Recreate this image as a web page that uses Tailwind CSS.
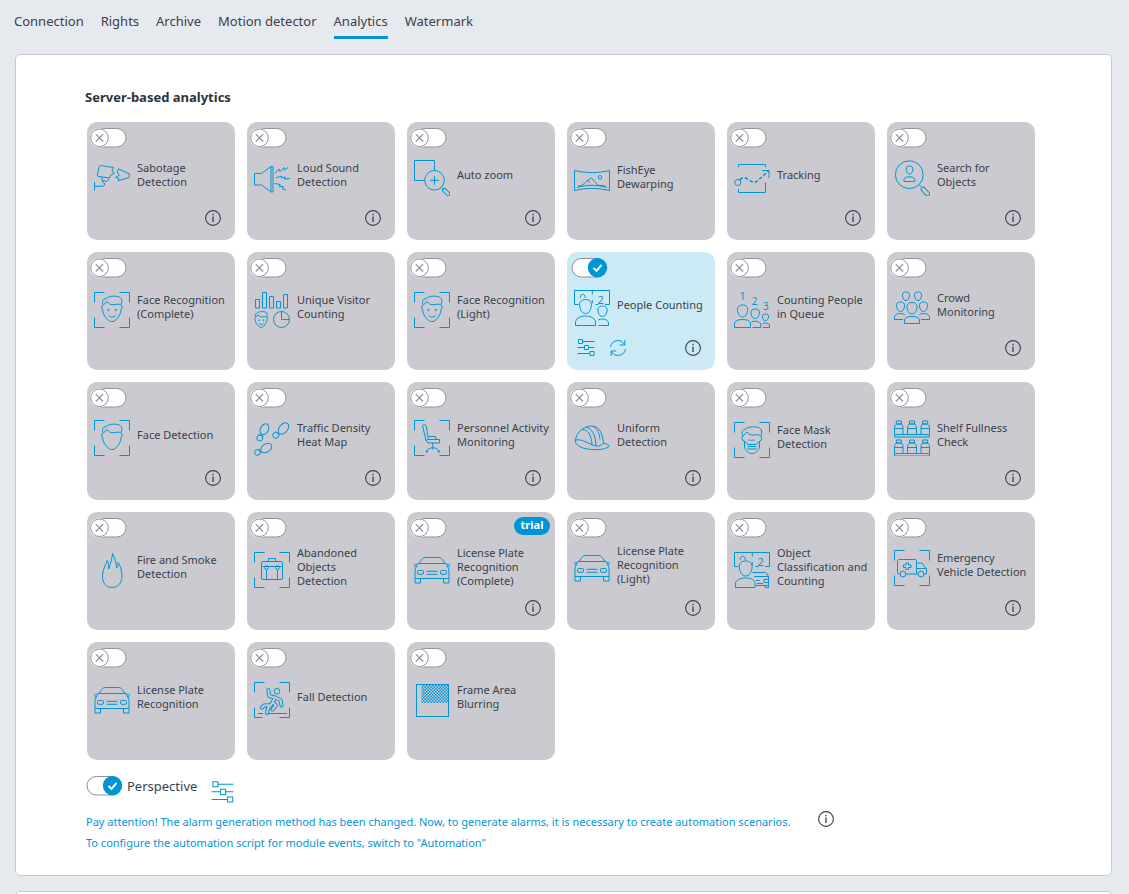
<!DOCTYPE html>
<html lang="en">
<head>
<meta charset="utf-8">
<meta name="viewport" content="width=device-width, initial-scale=1">
<title>Analytics</title>
<script src="https://cdn.jsdelivr.net/npm/@tailwindcss/browser@4"></script>
</head>
<body class="min-h-screen overflow-x-hidden bg-[#e6e9ee] font-['Noto_Sans',sans-serif] text-[13px] text-[#39414d]">

<svg class="absolute h-0 w-0" aria-hidden="true">
  <defs>
    <pattern id="checker" width="3" height="3" patternUnits="userSpaceOnUse"><path d="M0 0h1.5v1.5H0zM1.5 1.5H3V3H1.5z" fill="#0095d5"/></pattern>
    <symbol id="off" viewBox="0 0 38 20">
      <rect x=".5" y=".5" width="35.5" height="18.5" rx="9.25" fill="#fff" stroke="#8f909c"/>
      <circle cx="9.5" cy="9.8" r="9.8" fill="#fff"/>
      <circle cx="9.5" cy="9.8" r="8.8" fill="#fff" stroke="#8f909c"/>
      <path d="M5.8 6.1l7.4 7.4M13.2 6.1l-7.4 7.4" stroke="#8f909c" stroke-width="1.2" fill="none"/>
    </symbol>
    <symbol id="on" viewBox="0 0 38 20">
      <rect x="2" y=".5" width="34" height="18.5" rx="9.25" fill="#fff" stroke="#8f909c"/>
      <circle cx="27.5" cy="9.7" r="9.7" fill="#0095d5"/>
      <path d="M23.5 10l3 2.8 5-5.8" stroke="#fff" stroke-width="2" fill="none"/>
    </symbol>
    <symbol id="info" viewBox="0 0 16 16">
      <circle cx="8" cy="8" r="7.4" fill="none" stroke="#39414d" stroke-width="1.1"/>
      <path d="M8 6.5v5.5M8 3.8v1.4" stroke="#39414d" stroke-width="1.3"/>
    </symbol>
    <symbol id="sliders" viewBox="0 0 18 18">
      <path d="M5.5 2.500H17.500M.5 8.500h6.500M11 8.500h6.500M.5 14.500H13M1.500.5h4v4h-4zM7.500 6.500h4v4h-4zM13 12.500h4v4h-4z"/>
    </symbol>
    <symbol id="refresh" viewBox="0 0 18 18">
      <path d="M1.500 8A7.500 7.500 0 0 1 15.500 5.500M15.800 1v5h-5M16.500 10A7.500 7.500 0 0 1 2.500 12.500M2.200 17v-5h5"/>
    </symbol>
    <symbol id="corners" viewBox="0 0 36 36">
      <path d="M.5 10.500V.5H10.500M25.500.5h10V10.500M35.500 25.500v10h-10M10.500 35.500H.5v-10"/>
    </symbol>
    <symbol id="head" viewBox="0 0 36 36" overflow="visible">
      <path d="M9.300 12.800c-1.800.2-2 3.200-.8 5.200.5 4 2.500 7 5 9.500 2.800 2.800 6 2.800 8.800 0 2.500-2.500 4.200-5.500 4.800-9.500 1.400-2 1.200-5-.4-5.400M9.300 12.800C7.300 9 9.500 6.500 12 6.800 14 4 20 3.600 24 4.600c4 1.100 5 4.400 2.800 8M9.300 12.800l4-3.300c1.500 2.600 4 3.700 6.700 3.200 2.500-.5 4.800-.7 6.700 0"/>
    </symbol>
    <symbol id="smile" viewBox="0 0 36 36" overflow="visible">
      <path d="M14.700 23.500c2 2.200 5 2.200 7 0"/><circle cx="14.300" cy="18" r=".7"/><circle cx="21.700" cy="18" r=".7"/>
    </symbol>
    <symbol id="car" viewBox="0 0 36 36">
      <path d="M5 11.500L7.700 7.500C8.500 6 10 5.500 12 5.500h12c2 0 3.500.5 4.300 2l2.700 4M3.500 11.500h29M3.500 12.500H1.200C.3 12.500.3 14.500 1.200 14.500H2M32.500 12.500h2.300c.9 0 .9 2 0 2H34M3.500 13L1.700 16c-.6 1-.7 2-.7 3.500v7h34v-7c0-1.500-.1-2.500-.7-3.500l-1.800-3M1 26.500v4.500h5.500v-4.500M29.500 26.500v4.500H35v-4.500M12.500 19.300h11M12.500 22.300h11"/>
      <rect x="3.500" y="18.500" width="6" height="3.800" rx="1.200"/><rect x="26.500" y="18.500" width="6" height="3.800" rx="1.200"/>
    </symbol>
    <symbol id="board" viewBox="0 0 36 36">
      <path d="M4.500 14.500h-4V.5h35v14h-4.500M18.300.5v4M21.500 14.500h3M6.300 8c0-5 5-5 5 0M18.300 10v3.500"/>
      <text x="23.500" y="13.500" font-size="11" font-family="Noto Sans, sans-serif" fill="#0095d5" stroke="none">2</text>
    </symbol>
    <symbol id="bottles" viewBox="0 0 36 18">
      <path d="M.5 14V6.500L2.500 4h5L9 6.500V14M2.300 1h5v3h-5zM.5 8.500H9M13.500 14V6.500l2-2.500h5l2 2.500V14M15.500 1h5v3h-5zM13.500 8.500h9M27 14V6.500L28.500 4h5l2 2.500V14M28.700 1h5v3h-5zM27 8.500h8.500M.5 14.500h35v2.500H.5z"/>
    </symbol>

    <symbol id="i-sabotage" viewBox="0 0 36 36"><path d="M6.500 5.500l7.300 1.200 5.700.8-1.600 3.600 2.500 2.200-3.800 1.800-1.200 2.900L4 16.300c-.8-.4-.8-1.200-.5-2.100l1.700-7.600c.2-.7.6-1.200 1.300-1.100zM24.300 8.800L35.500 14l-.5 3.500-11 3.300.8-2.600-3.300-.8 4-2.400-2.200-2.200zM.5 22v8.500M.5 26.300h7.800c1.500 0 1.700-.8 2.700-2.300L8.500 22l-.7-4.500M8.500 20.500l4.500 1 2-2.500"/></symbol>
    <symbol id="i-sound" viewBox="0 0 36 36"><path d="M.5 13.500h7l9.500-7h2V32h-2l-9.500-7h-7zM17 6.500V32M21 13.500l4-4.500 1.200 2.500L30 7.500l.3 2.700 3.700-2.700M21.700 17.700l5.800-1.500.3 2 3-1.400-.3 2.200 5.500-.6M20.500 23.500l5.800 1-1 2.200 4-.2-.8 2.300 3.500 1.400"/></symbol>
    <symbol id="i-zoom" viewBox="0 0 36 36"><path d="M20.500 10.500V.5H.5v20H10.500M20.500 15.800v9M16 20.300h9M27.500 27.500l2 2"/><circle cx="20.500" cy="20.300" r="9.800"/><rect x="28" y="30.200" width="8.500" height="3.600" rx="1.500" transform="rotate(45 32.200 32)"/></symbol>
    <symbol id="i-fisheye" viewBox="0 0 36 36"><path d="M.5 8.500q17.500 4.300 35 0v20q-17.500-4.300-35 0zM3 25.500Q18 21 33 25.500M4 24c3 0 4.500-1 6-2.200l3.500-3.600c1 0 1.300 2 2 2.600M12.500 19.500l4-3.200c2-.5 2.700 1.500 4 3.200l3 3.200c2 1.500 5 .5 8 1.300"/><circle cx="26" cy="15.300" r="1.800"/></symbol>
    <symbol id="i-tracking" viewBox="0 0 36 36"><path d="M4.500 7V4.500h27V7M4.500 29v3.500h27V22.500M28 10.500h7v7.500"/><path d="M6 20c2.500-4 6-2 9 0 4.500 3.500 7 2.500 10-.5l9.500-8.500" stroke-dasharray="3.500 2" stroke-width="1.500"/><circle cx="3.800" cy="22.500" r="3.100"/></symbol>
    <symbol id="i-search" viewBox="0 0 36 36"><circle cx="15.300" cy="14.700" r="13.900"/><path d="M15.500 6c2.500 0 3.800 1.500 3.300 4-.4 2.500-1.500 4-3.300 4s-3-1.500-3.300-4 .8-4 3.300-4zM10 21.500v-2.200c1-2 3-2.500 5.300-2.500s4.500.5 5.400 2.500v2.200zM25 24.500l3 3"/><rect x="26.500" y="29.500" width="10" height="4.200" rx="1.800" transform="rotate(47 31.500 31.500)"/></symbol>
    <symbol id="i-face" viewBox="0 0 36 36"><use href="#corners"/><use href="#head"/><use href="#smile"/></symbol>
    <symbol id="i-facedet" viewBox="0 0 36 36"><use href="#corners"/><use href="#head"/></symbol>
    <symbol id="i-unique" viewBox="0 0 36 36"><path d="M1.500 7.500h4V16h-4zM8.500.5h4V16h-4zM15.500 4.500h4V16h-4zM22.500 9.500h4V16h-4zM29.500 2.500h4V16h-4z"/><circle cx="27.500" cy="27.500" r="8"/><path d="M27.500 19.500v8h8"/><g transform="translate(-4 17) scale(.62)" stroke-width="1.500"><use href="#head"/><use href="#smile"/></g></symbol>
    <symbol id="i-people" viewBox="0 0 36 36"><use href="#board"/><path d="M11.500 9.500c4 0 6.500 2.500 5.800 6.500-.6 4.500-2.500 7.500-5.800 7.500S6.300 20.500 5.700 16C5 12 7.500 9.500 11.500 9.500zM1.500 35.500v-4c1.500-4 5.500-5.500 10-5.500s8.500 1.500 10 5.500v4zM28.500 16c3.500 0 5 2 4.500 5-.5 3.500-2 5.500-4.500 5.500S24.500 24.500 24 21c-.5-3 1-5 4.500-5zM24.500 35.500h10v-3c-1-2.500-3.500-3.500-6-3.500-1.500 0-3 .3-4.300 1"/></symbol>
    <symbol id="i-queue" viewBox="0 0 36 36"><g font-size="10" font-family="Noto Sans, sans-serif" fill="#0095d5" stroke="none" text-anchor="middle"><text x="8.500" y="8">1</text><text x="20.500" y="12.500">2</text><text x="31.800" y="17.500">3</text></g><path d="M8.500 13c3.800 0 5.500 2.200 5 5.500-.6 4-2.300 6.500-5 6.500s-4.400-2.500-5-6.500c-.5-3.300 1.200-5.500 5-5.500zM.5 35.500V31c1.500-2.800 4.500-3.500 8-3.500s6.500.7 8 3.500v4.500zM21.200 17c3.300 0 4.700 1.800 4.200 4.500-.5 3-2 5-4.200 5s-3.700-2-4.200-5c-.4-2.700.9-4.500 4.200-4.500zM18.500 35.500h8.300V32c-1.300-2-3.300-2.700-5.800-2.700-1.500 0-2.500.2-3.500.7M31.500 22c2.300 0 3.300 1.300 3 3.200-.3 2.200-1.500 3.500-3 3.500s-2.700-1.300-3-3.500c-.3-1.900.7-3.200 3-3.200zM29 35.500h6.500V33c-.8-1.500-2.200-2-4-2-1 0-2 .2-2.700.6"/></symbol>
    <symbol id="i-crowd" viewBox="0 0 36 36"><path d="M12 2c2.700 0 3.800 1.500 3.500 3.800-.3 3-1.700 4.700-3.500 4.700s-3.200-1.700-3.500-4.700C8.200 3.500 9.300 2 12 2zM24 2c2.700 0 3.800 1.500 3.500 3.800-.3 3-1.700 4.700-3.500 4.700s-3.200-1.700-3.500-4.700C20.200 3.500 21.300 2 24 2zM6.500 12c3 0 4.300 1.500 4 4.300-.4 3.500-2 5.200-4 5.200s-3.600-1.700-4-5.200C2.200 13.500 3.500 12 6.500 12zM29.500 12c3 0 4.300 1.500 4 4.300-.4 3.500-2 5.200-4 5.200s-3.600-1.700-4-5.200c-.3-2.800 1-4.300 4-4.300zM18 12.500c3.800 0 5.400 2.200 5 5.300-.6 4-2.400 6.200-5 6.200s-4.400-2.200-5-6.200c-.4-3.100 1.200-5.300 5-5.300zM10.500 33.500v-4c1.500-2.500 4-3 7.500-3s6 .5 7.500 3v4zM9 29.500H.5v-3c1.200-2.300 3.200-3 6-3 1.800 0 3 .3 4.200 1M27 29.500h8.500v-3c-1.200-2.300-3.200-3-6-3-1.800 0-3 .3-4.200 1"/></symbol>
    <symbol id="i-steps" viewBox="0 0 36 36"><ellipse cx="10.500" cy="9.200" rx="4" ry="5.700" transform="rotate(28 10.500 9.200)"/><circle cx="5.800" cy="18" r="3"/><path d="M4.500 14.200l5 2.400"/><ellipse cx="29.500" cy="8.500" rx="4.200" ry="6.500" transform="rotate(40 29.500 8.500)"/><circle cx="21.700" cy="15.300" r="3"/><path d="M21.500 11.500l4 3.700"/><ellipse cx="12.300" cy="28" rx="4.200" ry="6" transform="rotate(55 12.300 28)"/><circle cx="3.500" cy="32.500" r="2.900"/><path d="M4.500 28.800l2.700 4.400"/></symbol>
    <symbol id="i-chair" viewBox="0 0 36 36"><use href="#corners"/><path d="M8.500 5.500c1-1 2.500-1 3.500 0l2.500 13.500-2.500 1.500zM12 20.500l2 2.500h11.500v-3.500h-11M15 16.500h6.500l1 3M18.800 23v6.500M13 30.500c1-2 3.500-2.700 5.800-2.700s4.700.7 5.800 2.700"/><circle cx="12.800" cy="31.500" r=".9"/><circle cx="24.800" cy="31.500" r=".9"/></symbol>
    <symbol id="i-helmet" viewBox="0 0 36 36"><path d="M1.500 20C3 12 9 6.500 17 6c7 0 11.500 5 12.500 17.500M1.500 19.500C.5 23.500 4 26.500 10 28.300c8 2.200 20.500 2 24.800-1.800 1.400-1.700-2-2.600-5.300-3.300M1.500 20c8-1.300 13 4.500 20.500 6 3 .6 6-.8 7.500-2.800M8.500 9.500C14.500 9.500 17.500 16 18 25M12 7.300c6.500 1.200 9.700 8.200 10 18.700M19 6.300c4.500 2 6.500 8 7 13"/></symbol>
    <symbol id="i-mask" viewBox="0 0 36 36"><use href="#corners"/><path d="M9 14C7 10 8.500 8 11 7.500 13 5 20 4 24.500 5.500c3.500 1.500 4 5 2.200 8.500M9 14l4-4c1.500 2.500 4 3.500 7 3 2.500-.5 5-.5 6.700 1M9 14c-1.500 1-1.200 4.500.3 5M26.700 14c1.500 1 1.200 4.500-.3 5M9 18l5 4.500h8l5-4.500M10.500 20v5c1.500 4 4 6.500 7.500 6.500s6-2.500 7.500-6.500v-5M13.500 24.500h9M13.500 27h9M14.500 18.500l1.500-1 1.500 1.500 1.500-1.500 1.500 1"/></symbol>
    <symbol id="i-shelf" viewBox="0 0 36 36"><use href="#bottles" width="36" height="18"/><use href="#bottles" y="19" width="36" height="18"/></symbol>
    <symbol id="i-fire" viewBox="0 0 36 36"><path d="M18 35.500c-6.500 0-9.500-5-9.500-11.500S11.500 14.500 13 8.500c1.700 3 1.900 5.500 1.600 8.500C16 12.500 18.300 7 18.500 1.500c2.500 5 4 9.500 4 14.500C23.600 14.500 24 13 24.200 10.500 26.500 14.500 28 19 28 24c0 6.500-3.500 11.500-10 11.500z"/></symbol>
    <symbol id="i-bag" viewBox="0 0 36 36"><use href="#corners"/><path d="M14.500 9.500v-3h7v3M8.300 14.500h19.400M12.500 18v9.500M23.500 18v9.500"/><rect x="7.500" y="9.500" width="21" height="18" rx="1.500"/><circle cx="12.500" cy="15.500" r="1.900"/><circle cx="23.500" cy="15.500" r="1.900"/></symbol>
    <symbol id="i-car" viewBox="0 0 36 36"><use href="#car"/></symbol>
    <symbol id="i-object" viewBox="0 0 36 36"><use href="#board"/><path d="M11.700 9c4.500 0 7 2.500 6.300 7-.7 5-2.800 8-6.300 8s-5.600-3-6.300-8c-.7-4.500 1.800-7 6.300-7zM1.500 35.500v-4.500c1.500-4 5.500-5 10-5s8.500 1 9.500 5v4.500zM18.500 20.500h12c2 0 3 2 4 4v9M20 24.500h14.500M22 28.500h3.500M30 27.500h4.500v3H30zM23 31.500h6M21.500 33.500h13M31 33.500v2h3.500v-2"/></symbol>
    <symbol id="i-van" viewBox="0 0 36 36"><use href="#corners"/><path d="M6 24H4.500c-1 0-1-.5-1-1.500V11c0-1 .5-1.500 1.500-1.500h16c1 0 1.500.5 1.500 1.500v13H12M22.500 13h4c2 0 3 1.500 4 4l2 1.500V24h-2.500M22.500 18.500h9.500M22.500 24H24M12 13h2.500v2H17v2.500h-2.500v2H12v-2H9.500V15H12z"/><circle cx="9" cy="24" r="2.900"/><circle cx="27" cy="24" r="2.900"/></symbol>
    <symbol id="i-fall" viewBox="0 0 36 36"><path d="M.5 10.500V.5H10.500M25.500.5h10V10.500M35.500 25.500v10h-10M8.500 35.500H.5v-10M4 31.500h5M15 31.500h18"/><g stroke-linecap="round" stroke-linejoin="round"><path d="M14.300 8l.9 6 5.800 1.500-4 7.500-7 .5-2 2M17 23l-3 3-1 5M21 15.500l5.500 2.500 1 5.500M19 20.500l3 3-3.500 4" stroke-width="4"/><path d="M14.300 8l.9 6 5.800 1.500-4 7.500-7 .5-2 2M17 23l-3 3-1 5M21 15.500l5.500 2.500 1 5.500M19 20.500l3 3-3.500 4" stroke="#cbcad0" stroke-width="2"/></g><circle cx="23" cy="9.300" r="2.800"/></symbol>
    <symbol id="i-blur" viewBox="0 0 36 36"><rect x="2.500" y="2.500" width="32" height="32"/><rect x="7.500" y="3" width="27" height="18" fill="url(#checker)" stroke="none"/></symbol>
  </defs>
</svg>

<nav class="flex gap-[17px] pt-2 pl-[14px]" aria-label="Camera settings">
  <a href="#" class="h-[31px] leading-[26px]">Connection</a>
  <a href="#" class="h-[31px] leading-[26px]">Rights</a>
  <a href="#" class="h-[31px] leading-[26px]">Archive</a>
  <a href="#" class="h-[31px] leading-[26px]">Motion detector</a>
  <a href="#" class="h-[31px] border-b-3 border-[#0095d5] leading-[26px]" aria-current="page">Analytics</a>
  <a href="#" class="h-[31px] leading-[26px]">Watermark</a>
</nav>

<main class="mt-[15px] pr-[17px] pl-[15px]">
  <section class="rounded-[5px] border border-[#c8c9d0] bg-white pt-8 pr-[60px] pb-[22px] pl-[69px]">
    <h1 class="mb-[15px] text-[13px] leading-5 font-bold text-[#2c333b]">Server-based analytics</h1>
    <ul id="modules" class="ml-0.5 grid grid-cols-[repeat(auto-fill,148px)] gap-3"></ul>

    <div class="mt-4 flex items-start">
      <span class="grid h-5 w-[38px]">
        <input id="perspective" type="checkbox" checked class="col-start-1 row-start-1 h-5 w-[38px] appearance-none rounded-full">
        <svg class="pointer-events-none col-start-1 row-start-1 h-5 w-[38px]"><use href="#on"/></svg>
      </span>
      <label for="perspective" class="ml-1 leading-5">Perspective</label>
      <button type="button" aria-label="Perspective settings" class="mt-[5px] ml-[14px]"><svg class="h-[23px] w-[23px] fill-none stroke-[#0095d5]" stroke-width=".8"><use href="#sliders"/></svg></button>
    </div>
    <div class="mt-[7px] flex items-start pl-px text-[11px] leading-[21px] text-[#0095d5]">
      <p>Pay attention! The alarm generation method has been changed. Now, to generate alarms, it is necessary to create automation scenarios.<br>To configure the automation script for module events, switch to "Automation"</p>
      <button type="button" aria-label="Information" class="ml-7"><svg class="h-4 w-4"><use href="#info"/></svg></button>
    </div>
  </section>
  <section class="mt-[15px] h-10 rounded-[5px] border border-[#c8c9d0] bg-white"></section>
</main>

<script>
  // title, icon, then flags: i = info button, on = enabled, low = body set lower, trial = badge
  const modules = [
    ['Sabotage<br>Detection', 'sabotage', 'i'], ['Loud Sound<br>Detection', 'sound', 'i'], ['Auto zoom', 'zoom', 'i'],
    ['FishEye<br>Dewarping', 'fisheye', ''], ['Tracking', 'tracking', 'i'], ['Search for<br>Objects', 'search', 'i'],
    ['Face Recognition<br>(Complete)', 'face', ''], ['Unique Visitor<br>Counting', 'unique', ''], ['Face Recognition<br>(Light)', 'face', ''],
    ['People Counting', 'people', 'i on'], ['Counting People<br>in Queue', 'queue', ''], ['Crowd<br>Monitoring', 'crowd', 'i'],
    ['Face Detection', 'facedet', 'i'], ['Traffic Density<br>Heat Map', 'steps', 'i'], ['Personnel Activity<br>Monitoring', 'chair', 'i'],
    ['Uniform<br>Detection', 'helmet', 'i'], ['Face Mask<br>Detection', 'mask', ''], ['Shelf Fullness<br>Check', 'shelf', 'i'],
    ['Fire and Smoke<br>Detection', 'fire', ''], ['Abandoned<br>Objects<br>Detection', 'bag', ''], ['License Plate<br>Recognition<br>(Complete)', 'car', 'i low trial'],
    ['License Plate<br>Recognition<br>(Light)', 'car', 'i'], ['Object<br>Classification and<br>Counting', 'object', ''], ['Emergency<br>Vehicle Detection', 'van', 'i'],
    ['License Plate<br>Recognition', 'car', ''], ['Fall Detection', 'fall', ''], ['Frame Area<br>Blurring', 'blur', '']
  ];
  document.getElementById('modules').innerHTML = modules.map(([title, icon, flags], n) => {
    const has = f => flags.split(' ').includes(f);
    const card = has('on') ? 'bg-[#cbeaf6]' : 'bg-[#cbcad0]';
    const body = has('i') && !has('low') ? 'mt-1.5' : 'mt-2';
    return `<li class="relative flex min-h-[118px] flex-col rounded-[10px] pt-1.5 ${card}">
      <span class="ml-[3px] grid h-5 w-[38px]">
        <input id="m${n}" type="checkbox" ${has('on') ? 'checked' : ''} class="col-start-1 row-start-1 h-5 w-[38px] appearance-none rounded-full">
        <svg class="pointer-events-none col-start-1 row-start-1 h-5 w-[38px]"><use href="#${has('on') ? 'on' : 'off'}"/></svg>
      </span>
      ${has('trial') ? '<span class="absolute top-[5px] right-[5px] h-[18px] w-9 rounded-full bg-[#0095d5] text-center text-[11px] leading-4 font-bold text-white">trial</span>' : ''}
      <div class="flex h-12 items-center gap-[7px] pl-[7px] ${body}">
        <svg class="h-9 w-9 shrink-0 overflow-visible fill-none stroke-[#0095d5]" aria-hidden="true"><use href="#i-${icon}"/></svg>
        <label for="m${n}" class="pb-1.5 text-[11px] leading-[14px] whitespace-nowrap">${title}</label>
      </div>
      <div class="mt-auto mb-[13px] flex h-[18px] items-center gap-[14px] pr-[14px] pl-[10px]">
        ${has('on') ? `<button type="button" aria-label="Settings"><svg class="h-[18px] w-[18px] fill-none stroke-[#0095d5]"><use href="#sliders"/></svg></button>
        <button type="button" aria-label="Reset"><svg class="h-[18px] w-[18px] fill-none stroke-[#0095d5]"><use href="#refresh"/></svg></button>` : ''}
        ${has('i') ? '<button type="button" aria-label="Information" class="ml-auto"><svg class="h-4 w-4"><use href="#info"/></svg></button>' : ''}
      </div>
    </li>`;
  }).join('');
</script>
</body>
</html>
